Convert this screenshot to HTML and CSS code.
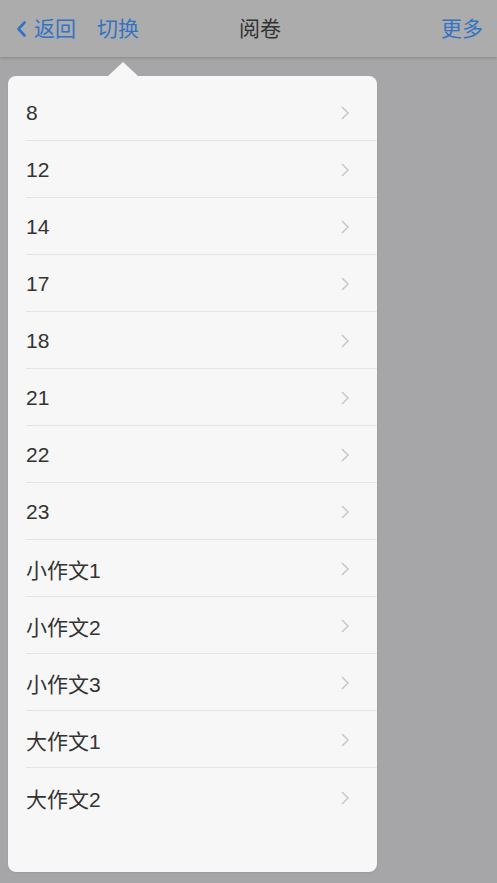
FILE: index.html
```html
<!DOCTYPE html>
<html lang="zh-CN">
<head>
<meta charset="utf-8">
<title>阅卷</title>
<link rel="stylesheet" href="styles.css">
</head>
<body>
<header class="nav">
  <a class="nav-back">
    <svg class="back-icon" width="10" height="16" viewBox="0 0 10 16"><polyline points="8.5,1.5 2.5,8 8.5,14.5" fill="none" stroke="#3373c4" stroke-width="2.6" stroke-linecap="round" stroke-linejoin="round"/></svg>
    <span>返回</span>
  </a>
  <a class="nav-switch">切换</a>
  <span class="nav-title">阅卷</span>
  <a class="nav-more">更多</a>
</header>
<div class="popover">
  <ul class="menu">
    <li class="item"><span>8</span><svg class="chev" width="10" height="16" viewBox="0 0 10 16"><polyline points="2,2 8,8 2,14" fill="none" stroke="#c8c8cc" stroke-width="1.5"/></svg></li>
    <li class="item"><span>12</span><svg class="chev" width="10" height="16" viewBox="0 0 10 16"><polyline points="2,2 8,8 2,14" fill="none" stroke="#c8c8cc" stroke-width="1.5"/></svg></li>
    <li class="item"><span>14</span><svg class="chev" width="10" height="16" viewBox="0 0 10 16"><polyline points="2,2 8,8 2,14" fill="none" stroke="#c8c8cc" stroke-width="1.5"/></svg></li>
    <li class="item"><span>17</span><svg class="chev" width="10" height="16" viewBox="0 0 10 16"><polyline points="2,2 8,8 2,14" fill="none" stroke="#c8c8cc" stroke-width="1.5"/></svg></li>
    <li class="item"><span>18</span><svg class="chev" width="10" height="16" viewBox="0 0 10 16"><polyline points="2,2 8,8 2,14" fill="none" stroke="#c8c8cc" stroke-width="1.5"/></svg></li>
    <li class="item"><span>21</span><svg class="chev" width="10" height="16" viewBox="0 0 10 16"><polyline points="2,2 8,8 2,14" fill="none" stroke="#c8c8cc" stroke-width="1.5"/></svg></li>
    <li class="item"><span>22</span><svg class="chev" width="10" height="16" viewBox="0 0 10 16"><polyline points="2,2 8,8 2,14" fill="none" stroke="#c8c8cc" stroke-width="1.5"/></svg></li>
    <li class="item"><span>23</span><svg class="chev" width="10" height="16" viewBox="0 0 10 16"><polyline points="2,2 8,8 2,14" fill="none" stroke="#c8c8cc" stroke-width="1.5"/></svg></li>
    <li class="item"><span>小作文1</span><svg class="chev" width="10" height="16" viewBox="0 0 10 16"><polyline points="2,2 8,8 2,14" fill="none" stroke="#c8c8cc" stroke-width="1.5"/></svg></li>
    <li class="item"><span>小作文2</span><svg class="chev" width="10" height="16" viewBox="0 0 10 16"><polyline points="2,2 8,8 2,14" fill="none" stroke="#c8c8cc" stroke-width="1.5"/></svg></li>
    <li class="item"><span>小作文3</span><svg class="chev" width="10" height="16" viewBox="0 0 10 16"><polyline points="2,2 8,8 2,14" fill="none" stroke="#c8c8cc" stroke-width="1.5"/></svg></li>
    <li class="item"><span>大作文1</span><svg class="chev" width="10" height="16" viewBox="0 0 10 16"><polyline points="2,2 8,8 2,14" fill="none" stroke="#c8c8cc" stroke-width="1.5"/></svg></li>
    <li class="item"><span>大作文2</span><svg class="chev" width="10" height="16" viewBox="0 0 10 16"><polyline points="2,2 8,8 2,14" fill="none" stroke="#c8c8cc" stroke-width="1.5"/></svg></li>
  </ul>
</div>
</body>
</html>
```
FILE: styles.css
```css
html, body {
  margin: 0;
  padding: 0;
}
body {
  width: 497px;
  height: 883px;
  background: #a6a6a8;
  font-family: "Liberation Sans", "Noto Sans CJK SC", sans-serif;
  position: relative;
  overflow: hidden;
}
.nav {
  height: 57px;
  background: #acacac;
  box-shadow: 0 1px 3px rgba(0, 0, 0, 0.18);
  display: flex;
  align-items: center;
  padding: 0 14px 0 16px;
  box-sizing: border-box;
  font-size: 21px;
  line-height: 24px;
  position: relative;
  z-index: 1;
}
.nav-back {
  display: flex;
  align-items: center;
  color: #3373c4;
}
.back-icon {
  margin-right: 8px;
  margin-top: 1px;
}
.nav-switch {
  color: #3373c4;
  margin-left: 21px;
}
.nav-title {
  color: #333;
  margin-left: 100px;
}
.nav-more {
  color: #3373c4;
  margin-left: auto;
}
.popover {
  position: absolute;
  left: 8px;
  top: 76px;
  width: 369px;
  height: 796px;
  background: #f7f7f7;
  border-radius: 8px;
  box-shadow: 0 1px 2px rgba(0, 0, 0, 0.08);
}
.popover::before {
  content: "";
  position: absolute;
  left: 100px;
  top: -14px;
  width: 0;
  height: 0;
  border-left: 15px solid transparent;
  border-right: 15px solid transparent;
  border-bottom: 14px solid #f7f7f7;
}
.menu {
  list-style: none;
  margin: 0;
  padding: 8px 0 0 18px;
}
.item {
  height: 57px;
  box-sizing: border-box;
  display: flex;
  align-items: center;
  justify-content: space-between;
  padding: 2px 27px 0 0;
  border-bottom: 1px solid #e4e4e4;
  font-size: 21px;
  color: #333;
}
.item:last-child {
  border-bottom: none;
}
.chev {
  flex: none;
}
```
